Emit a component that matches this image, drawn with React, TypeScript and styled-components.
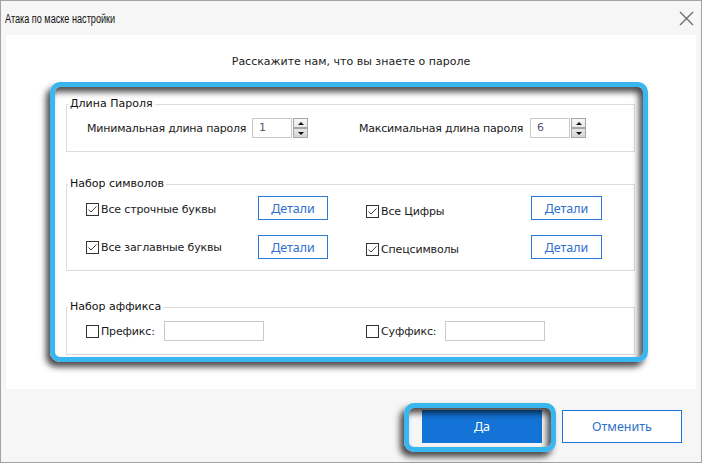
import React from "react";
import styled, { createGlobalStyle } from "styled-components";

const GlobalStyle = createGlobalStyle`
  html, body {
    margin: 0;
    padding: 0;
    background: #fff;
  }
  body {
    font-family: "DejaVu Sans", Verdana, sans-serif;
  }
`;

const Window = styled.div`
  position: relative;
  width: 702px;
  height: 463px;
  box-sizing: border-box;
  border: 1px solid #a3a3a3;
  background: #f6f6f6;
  display: flex;
  flex-direction: column;
`;

const TitleBar = styled.div`
  height: 34px;
  display: flex;
  align-items: center;
  justify-content: space-between;
  padding: 0 7px 0 4px;
`;

// the original caption font is a narrow one, so squeeze Liberation Sans a bit
const Title = styled.span`
  display: inline-block;
  font-family: "Liberation Sans", Arial, sans-serif;
  font-size: 12px;
  color: #111;
  margin-top: 1px;
  transform: scaleX(0.76);
  transform-origin: left center;
  white-space: nowrap;
`;

const CloseIcon = styled.svg`
  width: 15px;
  height: 15px;
  margin-top: 1px;
`;

const Panel = styled.div`
  margin: 0 5px;
  height: 354px;
  box-sizing: border-box;
  background: #fff;
  padding-top: 18px;
`;

const Header = styled.div`
  text-align: center;
  font-size: 11px;
  line-height: 18px;
  color: #222;
`;

const Groups = styled.div`
  padding-left: 60px;
`;

const Group = styled.fieldset<{ $top: number }>`
  margin: ${(p) => p.$top}px 0 0 0;
  width: 569px;
  box-sizing: border-box;
  border: 1px solid #dcdcdc;
  padding: 0;
  min-inline-size: 0;
`;

const Legend = styled.legend`
  padding: 0 2px;
  margin-left: 1px;
  font-size: 11px;
  line-height: 14px;
  color: #111;
`;

const GroupBody = styled.div<{ $pad: string }>`
  padding: ${(p) => p.$pad};
  display: flex;
  flex-direction: column;
  gap: 15px;
`;

const Row = styled.div`
  display: flex;
  align-items: center;
`;

const Item = styled.div<{ $w: number }>`
  width: ${(p) => p.$w}px;
  display: flex;
  align-items: center;
  flex-shrink: 0;
`;

const FieldLabel = styled.span<{ $w: number }>`
  width: ${(p) => p.$w}px;
  font-size: 11px;
  letter-spacing: -0.2px;
  color: #1a1a1a;
  white-space: nowrap;
`;

const NumberBox = styled.div`
  width: 40px;
  height: 20px;
  box-sizing: border-box;
  border: 1px solid #c9c9c9;
  font-size: 11px;
  line-height: 18px;
  padding-left: 6px;
  color: #5d5470;
`;

const Spinner = styled.div`
  margin-left: 1px;
  width: 15px;
  height: 20px;
  display: flex;
  flex-direction: column;
`;

const SpinBtn = styled.div<{ $down?: boolean }>`
  height: 10px;
  box-sizing: border-box;
  border: 1px solid #a6a6a6;
  background: ${(p) =>
    p.$down
      ? "linear-gradient(#e6e6e6, #d6d6d6)"
      : "linear-gradient(#f7f7f7, #e8e8e8)"};
  display: flex;
  align-items: center;
  justify-content: center;
  &::after {
    content: "";
    border-left: 3px solid transparent;
    border-right: 3px solid transparent;
    ${(p) =>
      p.$down ? "border-top: 3px solid #111;" : "border-bottom: 3px solid #111;"}
  }
`;

const CheckLabel = styled.label<{ $w: number; $shift?: number }>`
  width: ${(p) => p.$w}px;
  margin-top: ${(p) => (p.$shift || 0) * 2}px;
  display: flex;
  align-items: center;
  gap: 2px;
  font-size: 11px;
  letter-spacing: -0.15px;
  color: #1a1a1a;
  white-space: nowrap;
`;

const DetailsButton = styled.button<{ $w: number }>`
  width: ${(p) => p.$w}px;
  height: 24px;
  box-sizing: border-box;
  border: 1px solid #2d7ad6;
  background: #fff;
  color: #2f6fce;
  font-family: "Noto Sans", sans-serif;
  font-size: 12.5px;
  padding: 0;
  cursor: pointer;
`;

const TextBox = styled.div`
  width: 100px;
  height: 20px;
  box-sizing: border-box;
  border: 1px solid #c9c9c9;
`;

const Footer = styled.div`
  flex: 1;
  display: flex;
  justify-content: flex-end;
  align-items: flex-start;
  gap: 20px;
  padding: 21px 19px 0 0;
`;

const DialogButton = styled.button<{ $primary?: boolean }>`
  width: 120px;
  height: 33px;
  box-sizing: border-box;
  border: 1px solid ${(p) => (p.$primary ? "#1473d6" : "#1c74d4")};
  background: ${(p) => (p.$primary ? "#1473d6" : "#fff")};
  color: ${(p) => (p.$primary ? "#fff" : "#2e72c9")};
  font-family: "Noto Sans", sans-serif;
  font-size: 12.5px;
  padding: 0;
  cursor: pointer;
`;

// cyan marker frames drawn over the dialog
const Highlight = styled.div<{ $x: number; $y: number; $w: number; $h: number }>`
  position: absolute;
  left: ${(p) => p.$x}px;
  top: ${(p) => p.$y}px;
  width: ${(p) => p.$w}px;
  height: ${(p) => p.$h}px;
  box-sizing: border-box;
  border: 5px solid #38b6ef;
  border-radius: 10px;
  box-shadow: -4px 5px 6px rgba(0, 0, 0, 0.7),
    inset -4px 5px 6px rgba(0, 0, 0, 0.7);
  pointer-events: none;
`;

const Check = ({ on }: { on?: boolean }) => (
  <svg width="13" height="13" viewBox="0 0 13 13">
    <rect x="0.5" y="0.5" width="12" height="12" fill="#fff" stroke="#333" />
    {on && (
      <path d="M2.5 6.5 L5 9 L10.5 3.5" fill="none" stroke="#444" strokeWidth="1" />
    )}
  </svg>
);

const Spin = () => (
  <Spinner>
    <SpinBtn />
    <SpinBtn $down />
  </Spinner>
);

export default function App() {
  return (
    <>
      <GlobalStyle />
      <Window>
        <TitleBar>
          <Title>Атака по маске настройки</Title>
          <CloseIcon viewBox="0 0 15 15">
            <path d="M1 1 L14 14 M14 1 L1 14" stroke="#6e6e6e" strokeWidth="1.4" />
          </CloseIcon>
        </TitleBar>
        <Panel>
          <Header>Расскажите нам, что вы знаете о пароле</Header>
          <Groups>
            <Group $top={26}>
              <Legend>Длина Пароля</Legend>
              <GroupBody $pad="7px 0 13px 20px">
                <Row>
                  <Item $w={272}>
                    <FieldLabel $w={165}>Минимальная длина пароля</FieldLabel>
                    <NumberBox>1</NumberBox>
                    <Spin />
                  </Item>
                  <Item $w={240}>
                    <FieldLabel $w={171}>Максимальная длина пароля</FieldLabel>
                    <NumberBox>6</NumberBox>
                    <Spin />
                  </Item>
                </Row>
              </GroupBody>
            </Group>

            <Group $top={25}>
              <Legend>Набор символов</Legend>
              <GroupBody $pad="5px 0 11px 19px">
                <Row>
                  <Item $w={280}>
                    <CheckLabel $w={172} $shift={1}>
                      <Check on />
                      Все строчные буквы
                    </CheckLabel>
                    <DetailsButton $w={70}>Детали</DetailsButton>
                  </Item>
                  <Item $w={236}>
                    <CheckLabel $w={165} $shift={3}>
                      <Check on />
                      Все Цифры
                    </CheckLabel>
                    <DetailsButton $w={71}>Детали</DetailsButton>
                  </Item>
                </Row>
                <Row>
                  <Item $w={280}>
                    <CheckLabel $w={172}>
                      <Check on />
                      Все заглавные буквы
                    </CheckLabel>
                    <DetailsButton $w={70}>Детали</DetailsButton>
                  </Item>
                  <Item $w={236}>
                    <CheckLabel $w={165} $shift={2}>
                      <Check on />
                      Спецсимволы
                    </CheckLabel>
                    <DetailsButton $w={71}>Детали</DetailsButton>
                  </Item>
                </Row>
              </GroupBody>
            </Group>

            <Group $top={29}>
              <Legend>Набор аффикса</Legend>
              <GroupBody $pad="7px 0 13px 19px">
                <Row>
                  <Item $w={280}>
                    <CheckLabel $w={78}>
                      <Check />
                      Префикс:
                    </CheckLabel>
                    <TextBox />
                  </Item>
                  <Item $w={200}>
                    <CheckLabel $w={79}>
                      <Check />
                      Суффикс:
                    </CheckLabel>
                    <TextBox />
                  </Item>
                </Row>
              </GroupBody>
            </Group>
          </Groups>
        </Panel>
        <Footer>
          <DialogButton $primary>Да</DialogButton>
          <DialogButton>Отменить</DialogButton>
        </Footer>
        <Highlight $x={49} $y={81} $w={598} $h={280} />
        <Highlight $x={403} $y={402} $w={152} $h={49} />
      </Window>
    </>
  );
}
